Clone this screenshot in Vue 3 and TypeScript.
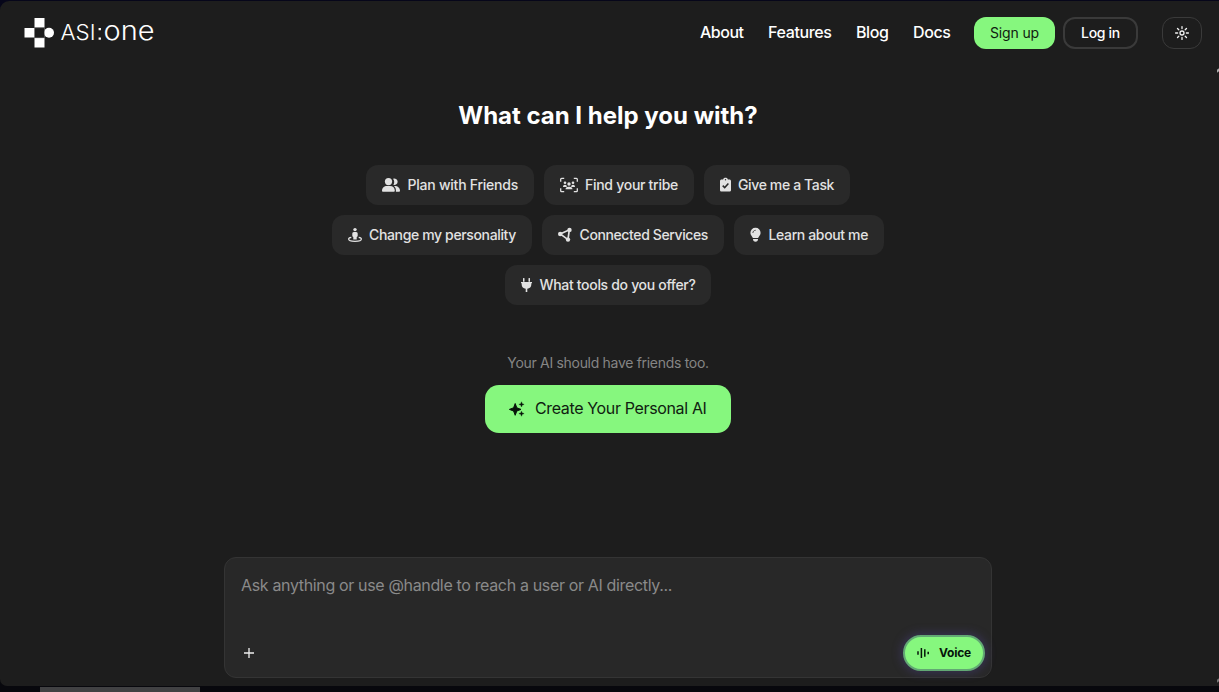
<script setup lang="ts">
import type { Directive } from 'vue'

interface Label { text: string; width: number }
interface Chip extends Label { icon: string; iconWidth: number; gap: number; box: number }

const links: Label[] = [
  { text: 'About', width: 43.5 },
  { text: 'Features', width: 63.5 },
  { text: 'Blog', width: 32.5 },
  { text: 'Docs', width: 37.5 },
]

const rows: Chip[][] = [
  [
    { text: 'Plan with Friends', width: 110.5, icon: 'friends', iconWidth: 18, gap: 7.5, box: 168 },
    { text: 'Find your tribe', width: 93, icon: 'tribe', iconWidth: 18, gap: 7, box: 150 },
    { text: 'Give me a Task', width: 96, icon: 'task', iconWidth: 11, gap: 7, box: 146 },
  ],
  [
    { text: 'Change my personality', width: 147, icon: 'person', iconWidth: 14, gap: 7, box: 200 },
    { text: 'Connected Services', width: 128.5, icon: 'nodes', iconWidth: 14, gap: 7.5, box: 182 },
    { text: 'Learn about me', width: 99.5, icon: 'bulb', iconWidth: 11, gap: 7.5, box: 150 },
  ],
  [{ text: 'What tools do you offer?', width: 156, icon: 'plug', iconWidth: 11, gap: 7.5, box: 206 }],
]

/* Adjusts tracking so a label fills its intended measure. */
const vTrack: Directive<HTMLElement, number> = {
  mounted(el, { value }) {
    const count = (el.textContent ?? '').length
    const natural = el.getBoundingClientRect().width
    if (count > 0) el.style.letterSpacing = `${(value - natural) / count}px`
  },
}
</script>

<template>
  <div class="window">
    <div class="app">
      <header class="top">
        <div class="logo">
          <svg width="140" height="40" viewBox="0 0 140 40" aria-label="ASI:one">
            <g fill="#fff">
              <rect x="10.5" y="4" width="10" height="9.5" />
              <rect x="0.5" y="14" width="10" height="9.5" />
              <rect x="10.5" y="24" width="10" height="9.5" />
              <circle cx="25" cy="18.7" r="5" />
            </g>
            <path d="M10.5 13.7h10v10h-10z" fill="none" stroke="#777" stroke-width=".6" />
            <g class="word">
              <text x="36.500" y="26.300" font-size="21" textLength="35" lengthAdjust="spacingAndGlyphs">ASI</text>
              <text x="79.500" y="26.300" font-size="26.500" textLength="51" lengthAdjust="spacingAndGlyphs">one</text>
            </g>
            <path d="M74.600 14h2.300v2.300h-2.300zM74.600 23.500h2.300v2.300h-2.300z" fill="#fff" />
          </svg>
        </div>
        <nav class="links">
          <a v-for="l in links" :key="l.text" class="link" :style="{ width: l.width + 'px' }"><span v-track="l.width">{{ l.text }}</span></a>
        </nav>
        <button class="btn signup"><span v-track="49">Sign up</span></button>
        <button class="btn login"><span v-track="39">Log in</span></button>
        <button class="btn theme" aria-label="Theme">
          <svg width="16" height="16" viewBox="0 0 16 16" fill="none" stroke="#f2f2f2" stroke-width="1.3" stroke-linecap="round">
            <circle cx="8" cy="8" r="2" />
            <path d="M8 1.6v2M8 12.4v2M1.6 8h2M12.4 8h2M3.5 3.5l1.3 1.3M11.2 11.2l1.3 1.3M3.5 12.5l1.3-1.3M11.2 4.8l1.3-1.3" />
          </svg>
        </button>
      </header>

      <main class="main">
        <h1 class="title"><span v-track="299.5">What can I help you with?</span></h1>
        <div class="chips">
          <div v-for="(row, i) in rows" :key="i" class="row">
            <button v-for="c in row" :key="c.text" class="chip" :style="{ width: c.box + 'px', gap: c.gap + 'px' }">
              <svg class="icon" :width="c.iconWidth" height="16" :viewBox="`0 0 ${c.iconWidth} 16`" fill="#e2e2e2">
                <template v-if="c.icon === 'friends'">
                  <path d="M11 1.8a3.2 3.2 0 1 1 .4 5.9c1.1-1.5 1.2-4-.4-5.9z" />
                  <path d="M12 9c3.700-.3 6 1.900 6 4.800 0 .7-.3 1-.9 1h-3.200c.3-2.300-.3-4.300-1.900-5.800z" />
                  <circle cx="6.500" cy="4.600" r="3.600" />
                  <path d="M5 9h3c2.900 0 4.800 2 4.800 4.800 0 .7-.3 1-.9 1H.9c-.6 0-.9-.3-.9-1C0 11 2.100 9 5 9z" />
                </template>
                <template v-else-if="c.icon === 'tribe'">
                  <path d="M.7 4.800V2.200q0-.9.9-.9h2.600M13.800 1.300h2.600q.9 0 .9.900v2.600M17.300 11.200v2.600q0 .9-.9.900h-2.600M4.200 14.700H1.600q-.9 0-.9-.9v-2.600" fill="none" stroke="#e2e2e2" stroke-width="1.300" />
                  <circle cx="5" cy="5.700" r="1.300" /><circle cx="13" cy="5.700" r="1.300" /><circle cx="9" cy="7" r="1.700" />
                  <path d="M3 10c0-1.500.8-2.300 2-2.300.7 0 1.200.2 1.500.6-.1.700.1 1.200.6 1.700zM15 10c0-1.500-.8-2.300-2-2.300-.7 0-1.200.2-1.500.6.1.7-.1 1.200-.6 1.700zM5.500 12.300c.1-1.600 1.100-2.500 2.500-2.500h2c1.400 0 2.400.9 2.500 2.500z" />
                </template>
                <template v-else-if="c.icon === 'task'">
                  <path fill-rule="evenodd" d="M1.700 2.500h1.400C3.300 1.200 4.200.7 5.500.7s2.200.5 2.400 1.800h1.400c1 0 1.700.7 1.700 1.600v8.800c0 1-.7 1.700-1.700 1.700H1.700c-1 0-1.700-.7-1.700-1.700V4.100c0-.9.700-1.600 1.700-1.600zM5.500 2a.7.7 0 1 0 0 1.400.7.7 0 0 0 0-1.400z" />
                  <path d="m2.700 8.600 2 2 3.700-4.100" fill="none" stroke="#292929" stroke-width="1.500" />
                </template>
                <template v-else-if="c.icon === 'person'">
                  <circle cx="7" cy="2.600" r="1.700" />
                  <path d="M5.900 5h2.200c1.100 0 1.600.8 1.600 1.700v2.100c0 .7-.4 1-1 1.200v2.500H5.300V10c-.6-.2-1-.5-1-1.200V6.700C4.300 5.800 4.800 5 5.900 5z" />
                  <path d="M3.300 10.300C1.500 10.600.6 11.200.6 12c0 1.300 2.700 2.300 6.400 2.300s6.400-1 6.400-2.300c0-.8-.9-1.400-2.700-1.700" fill="none" stroke="#e2e2e2" stroke-width="1.200" />
                </template>
                <template v-else-if="c.icon === 'nodes'">
                  <path d="m2.200 7 9.100-4.200L10 12.600z" fill="none" stroke="#e2e2e2" stroke-width="1.700" />
                  <circle cx="2.200" cy="7" r="2.200" /><circle cx="11.500" cy="2.900" r="2.200" /><circle cx="10" cy="12.600" r="2.200" />
                </template>
                <template v-else-if="c.icon === 'bulb'">
                  <path d="M5.500.8A5 5 0 0 0 .4 5.900c0 2.400 2 3.300 2.500 5.100h5.200c.5-1.800 2.500-2.700 2.500-5.100A5 5 0 0 0 5.500.8z" />
                  <path d="M3 12h5c0 1.800-.9 2.800-2.500 2.800S3 13.800 3 12z" />
                  <path d="M2.900 5.600c.1-1.300 1-2.200 2.400-2.300" fill="none" stroke="#292929" stroke-width=".8" stroke-linecap="round" />
                </template>
                <template v-else>
                  <path d="M2 1.200q.8-.6 1.500 0v3.500H2zM7.500 1.200q.8-.6 1.500 0v3.500H7.500zM0 5h11v1.300h-.7v1.500c0 2.200-1.600 3.600-4 3.900V15H4.700v-3.300c-2.400-.3-4-1.700-4-3.900V6.300H0z" />
                </template>
              </svg>
              <span v-track="c.width">{{ c.text }}</span>
            </button>
          </div>
        </div>
        <p class="hint"><span v-track="201.500">Your AI should have friends too.</span></p>
        <button class="create">
          <svg width="16" height="16" viewBox="0 0 16 16" fill="#07140a">
            <path d="M6.200 2.500 7.800 6.800 12 8.400 7.800 10 6.200 14.300 4.600 10 .4 8.400l4.200-1.600z" stroke="#07140a" stroke-width="1" stroke-linejoin="round" />
            <path d="m12.500.8.7 1.900 1.900.7-1.900.7-.7 1.900-.7-1.900-1.900-.7 1.900-.7zM12.500 10.200l.7 1.700 1.900.7-1.900.7-.7 1.900-.7-1.900-1.900-.7 1.900-.7z" stroke="#07140a" stroke-width=".4" />
          </svg>
          <span v-track="171.500">Create Your Personal AI</span>
        </button>
      </main>

      <section class="composer">
        <p class="placeholder"><span v-track="431">Ask anything or use @handle to reach a user or AI directly...</span></p>
        <div class="tools">
          <svg class="plus" width="16" height="16" viewBox="0 0 16 16" fill="none" stroke="#eee" stroke-width="1.300"><path d="M8 3v10M3 8h10" /></svg>
          <button class="voice">
            <svg width="12" height="12" viewBox="0 0 12 12" fill="none" stroke="#07140a" stroke-width="1.500"><path d="M1 4.300v3.400M4.400 1v10M7.800 2.200v7.600M11.200 4.800v2.400" /></svg>
            <span v-track="32">Voice</span>
          </button>
        </div>
      </section>
      <i class="mark upper"></i>
      <i class="mark lower"></i>
    </div>
    <div class="scroll"></div>
  </div>
</template>

<style>
body { background: #07070f; }
</style>

<style scoped>
.window { width: 1219px; height: 692px; padding-top: 1px; box-sizing: border-box; overflow: hidden; background: linear-gradient(#06061a, #08080d); font-family: Inter, "Liberation Sans", sans-serif; }
.window * { box-sizing: border-box; }
.app { position: relative; height: 685px; background: #1d1d1d; border-radius: 9px 0 0 7px; }
.top { height: 64px; display: flex; align-items: center; padding: 0 17px 0 24px; }
.logo { width: 140px; height: 40px; margin-top: 2px; margin-right: auto; }
.logo svg { display: block; }
.word { fill: #fff; font-weight: 300; }
.links { display: flex; gap: 24.500px; margin: 0 23.500px 2px 0; }
.link { color: #fff; font-size: 16px; font-weight: 500; white-space: nowrap; line-height: 24px; }
.btn { height: 32px; border-radius: 12px; font: 400 14px/20px Inter, sans-serif; padding: 0; display: flex; align-items: center; justify-content: center; white-space: nowrap; }
.signup { width: 81px; border: 0; background: #86f77e; color: #102010; margin-right: 8px; }
.login { width: 75px; border: 2px solid #3a3a3a; background: transparent; color: #fff; font-weight: 500; margin-right: 24px; }
.theme { width: 40px; border: 1px solid #3a3a3a; background: transparent; }
.main { width: 1216px; display: flex; flex-direction: column; align-items: center; }
.title { margin: 35px 0 0; height: 32px; font-size: 24px; line-height: 32px; font-weight: 700; color: #fff; white-space: nowrap; }
.chips { margin-top: 33px; display: flex; flex-direction: column; gap: 10px; }
.row { display: flex; justify-content: center; gap: 10px; }
.chip { height: 40px; border: 0; border-radius: 12px; background: #292929; color: #e2e2e2; padding: 0 0 0 16px; display: flex; align-items: center; font: 500 14px/20px Inter, sans-serif; white-space: nowrap; }
.icon { flex: none; }
.hint { margin: 48px 0 0; height: 20px; font-size: 14px; line-height: 20px; color: #858585; white-space: nowrap; }
.create { margin-top: 12px; width: 246px; height: 48px; border: 0; border-radius: 14px; background: #86f77e; color: #102010; display: flex; align-items: center; padding: 0 0 0 24px; gap: 10px; font: 400 16px/24px Inter, sans-serif; white-space: nowrap; }
.create span { margin-bottom: 2px; }
.composer { width: 768px; height: 121px; margin: 124px 0 0 224px; padding: 15px 6px 6px 16px; border: 1px solid #343434; border-radius: 12px; background: #282828; display: flex; flex-direction: column; justify-content: space-between; }
.placeholder { margin: 0; font-size: 16px; line-height: 24px; color: #8a8a8a; white-space: nowrap; }
.tools { display: flex; justify-content: space-between; align-items: center; }
.voice { width: 82px; height: 36px; border: 2px solid #62a874; border-radius: 18px; background: #86f77e; box-shadow: 0 0 10px 2px rgba(76, 66, 140, .42); color: #07140a; display: flex; align-items: center; padding: 0 0 0 12px; gap: 10px; font: 700 12px/20px Inter, sans-serif; white-space: nowrap; }
.mark { position: absolute; right: 0; width: 2px; height: 3px; background: #aaa; transform: skewY(-35deg); }
.upper { top: 68px; }
.lower { bottom: 4px; background: #777; }
.scroll { margin: 1px 0 0 40px; width: 160px; height: 5px; background: #414143; }
</style>
